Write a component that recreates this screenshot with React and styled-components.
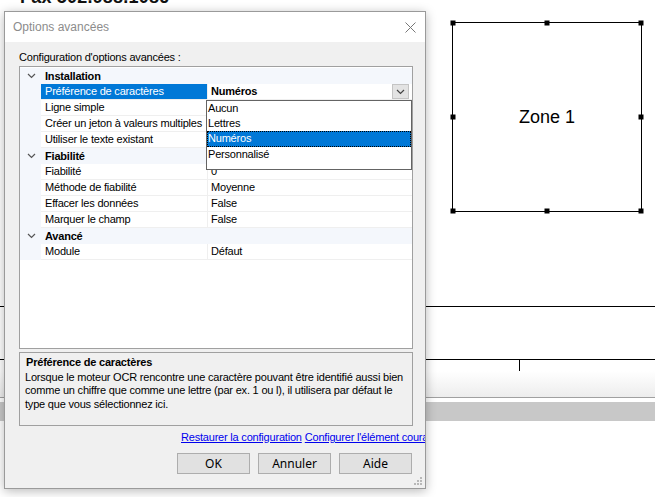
import styled, { createGlobalStyle } from 'styled-components';

const GlobalStyle = createGlobalStyle`
	html, body {
		margin: 0;
		padding: 0;
		background: #ffffff;
	}
	body {
		font-family: "Liberation Sans", Arial, sans-serif;
	}
`;

const Page = styled.div`
	position: relative;
	width: 655px;
	height: 497px;
	overflow: hidden;
	background: #ffffff;
`;

/* document canvas behind the dialog */
const FaxText = styled.div`
	position: absolute;
	left: 20px;
	top: -13px;
	font-family: "Liberation Sans", Arial, sans-serif;
	font-weight: bold;
	font-size: 18px;
	color: #111;
	letter-spacing: 0.2px;
`;

const ZoneBox = styled.div`
	position: absolute;
	left: 452px;
	top: 22px;
	width: 188px;
	height: 188px;
	border: 1px solid #000;
	display: flex;
	align-items: center;
	justify-content: center;
	font-size: 18px;
	color: #000;
`;

const Handle = styled.span`
	position: absolute;
	width: 5px;
	height: 5px;
	background: #000;
	left: ${({ $x }) => $x};
	top: ${({ $y }) => $y};
	transform: translate(-50%, -50%);
`;

const Rule = styled.div`
	position: absolute;
	left: 0;
	right: 0;
	top: ${({ $top }) => $top}px;
	height: 1px;
	background: #000;
`;

const Tick = styled.div`
	position: absolute;
	left: 519px;
	top: 359px;
	width: 1px;
	height: 12px;
	background: #000;
`;

const ShadeBand = styled.div`
	position: absolute;
	left: 0;
	right: 0;
	top: 371px;
	height: 26px;
	border-bottom: 1px solid #a0a0a0;
	background: linear-gradient(#ffffff, #ededed);
`;

const GrayBand = styled.div`
	position: absolute;
	left: 0;
	right: 0;
	top: 402px;
	height: 19px;
	background: #c8c8c8;
`;

/* dialog window */
const Dialog = styled.div`
	position: absolute;
	left: 4px;
	top: 11px;
	width: 420px;
	height: 476px;
	border: 1px solid #9a9a9a;
	background: #f0f0f0;
	box-shadow: 0 2px 10px rgba(0, 0, 0, 0.28);
	display: flex;
	flex-direction: column;
	overflow: hidden;
	font-family: "Liberation Sans", Arial, sans-serif;
	font-size: 11px;
	letter-spacing: -0.2px;
	color: #000;
`;

const TitleBar = styled.div`
	height: 30px;
	flex: none;
	background: #ffffff;
	display: flex;
	align-items: center;
	justify-content: space-between;
	padding: 0 9px 0 8px;
`;

const Title = styled.span`
	font-size: 12px;
	letter-spacing: 0;
	color: #8c8c8c;
`;

const Body = styled.div`
	flex: 1;
	display: flex;
	flex-direction: column;
	padding: 8px 12px 0 14px;
	position: relative;
`;

const Label = styled.div`
	height: 15px;
	line-height: 14px;
	white-space: nowrap;
`;

const Grid = styled.div`
	position: relative;
	margin-top: 1px;
	height: 283px;
	box-sizing: border-box;
	padding-top: 1px;
	border: 1px solid #a0a0a0;
	background: #ffffff;
	display: flex;
	flex-direction: column;
`;

const CategoryRow = styled.div`
	height: 16px;
	display: flex;
	align-items: center;
	background: #f4f7fc;
	font-weight: bold;
`;

const CategoryName = styled.span`
	padding-left: 4px;
`;

const Chevron = styled.span`
	width: 21px;
	display: flex;
	justify-content: center;
	padding-left: 1px;
	box-sizing: border-box;
`;

const PropRow = styled.div`
	height: 16px;
	display: flex;
`;

const Margin = styled.div`
	width: 21px;
	flex: none;
	background: #f4f7fc;
`;

const NameCell = styled.div`
	width: 162px;
	flex: none;
	padding-left: 4px;
	line-height: 15px;
	border-bottom: 1px solid #efefef;
	border-right: 1px solid #efefef;
	white-space: nowrap;
	overflow: hidden;
	background: ${({ $selected }) => ($selected ? '#0078d7' : '#ffffff')};
	color: ${({ $selected }) => ($selected ? '#ffffff' : '#000000')};
`;

const ValueCell = styled.div`
	flex: 1;
	padding-left: 3px;
	line-height: 15px;
	border-bottom: 1px solid #efefef;
	font-weight: ${({ $bold }) => ($bold ? 'bold' : 'normal')};
	white-space: nowrap;
`;

const DropButton = styled.div`
	position: absolute;
	left: 372px;
	top: 17px;
	width: 17px;
	height: 15px;
	background: #e3e3e3;
	border: 1px solid #c4c4c4;
	box-sizing: border-box;
	display: flex;
	align-items: center;
	justify-content: center;
`;

const DropList = styled.div`
	position: absolute;
	left: 186px;
	top: 33px;
	width: 204px;
	height: 68px;
	border: 1px solid #646464;
	background: #ffffff;
	display: flex;
	flex-direction: column;
`;

const DropItem = styled.div`
	height: ${({ $selected }) => ($selected ? '16px' : '15px')};
	line-height: 15px;
	padding-left: 1px;
	box-sizing: border-box;
	background: ${({ $selected }) => ($selected ? '#0078d7' : 'transparent')};
	color: ${({ $selected }) => ($selected ? '#ffffff' : '#000000')};
	outline: ${({ $selected }) => ($selected ? '1px dotted #000' : 'none')};
	outline-offset: -1px;
`;

const Description = styled.div`
	margin-top: 3px;
	height: 74px;
	box-sizing: border-box;
	border: 1px solid #a0a0a0;
	padding: 3px 6px 0 5px;
	line-height: 13.5px;
`;

const DescTitle = styled.div`
	font-weight: bold;
	padding-left: 1px;
	margin-bottom: 1px;
`;

const DescText = styled.div`
	white-space: nowrap;
`;

const LinkBar = styled.div`
	margin-top: 4px;
	height: 14px;
	padding-left: 162px;
	display: flex;
	gap: 3px;
	white-space: nowrap;
	line-height: 14px;
`;

const Link = styled.a`
	color: #0000ee;
	text-decoration: underline;
	cursor: pointer;
`;

const ButtonBar = styled.div`
	margin-top: 9px;
	display: flex;
	justify-content: flex-end;
	gap: 8px;
	padding-right: 1px;
`;

const Button = styled.button`
	width: 73px;
	height: 21px;
	background: #e1e1e1;
	border: 1px solid #adadad;
	font-family: "Noto Sans", "Liberation Sans", sans-serif;
	font-size: 12px;
	letter-spacing: 0;
	color: #000;
	padding: 0;
	display: flex;
	align-items: center;
	justify-content: center;
`;

const Grip = styled.svg`
	position: absolute;
	right: 3px;
	bottom: 3px;
`;

const ChevronIcon = ({ color = '#555' }) => (
	<svg width="9" height="6" viewBox="0 0 9 6">
		<path d="M1 1 L4.5 4.5 L8 1" fill="none" stroke={color} strokeWidth="1.2" />
	</svg>
);

const sections = [
	{
		name: 'Installation',
		props: [
			{ name: 'Préférence de caractères', value: 'Numéros', selected: true },
			{ name: 'Ligne simple', value: '' },
			{ name: 'Créer un jeton à valeurs multiples', value: '' },
			{ name: 'Utiliser le texte existant', value: '' },
		],
	},
	{
		name: 'Fiabilité',
		props: [
			{ name: 'Fiabilité', value: '0' },
			{ name: 'Méthode de fiabilité', value: 'Moyenne' },
			{ name: 'Effacer les données', value: 'False' },
			{ name: 'Marquer le champ', value: 'False' },
		],
	},
	{
		name: 'Avancé',
		props: [{ name: 'Module', value: 'Défaut' }],
	},
];

const choices = ['Aucun', 'Lettres', 'Numéros', 'Personnalisé'];

export default function App() {
	return (
		<Page>
			<GlobalStyle />
			<FaxText>Fax 502.988.1086</FaxText>
			<ZoneBox>
				Zone 1
				<Handle $x="0" $y="0" />
				<Handle $x="50%" $y="0" />
				<Handle $x="100%" $y="0" />
				<Handle $x="0" $y="50%" />
				<Handle $x="100%" $y="50%" />
				<Handle $x="0" $y="100%" />
				<Handle $x="50%" $y="100%" />
				<Handle $x="100%" $y="100%" />
			</ZoneBox>
			<Rule $top={306} />
			<Rule $top={359} />
			<Tick />
			<ShadeBand />
			<GrayBand />

			<Dialog>
				<TitleBar>
					<Title>Options avancées</Title>
					<svg width="11" height="11" viewBox="0 0 11 11">
						<path d="M0.5 0.5 L10.5 10.5 M10.5 0.5 L0.5 10.5" stroke="#777" strokeWidth="1" />
					</svg>
				</TitleBar>
				<Body>
					<Label>Configuration d'options avancées :</Label>
					<Grid>
						{sections.map((section) => (
							<div key={section.name}>
								<CategoryRow>
									<Chevron>
										<ChevronIcon />
									</Chevron>
									<CategoryName>{section.name}</CategoryName>
								</CategoryRow>
								{section.props.map((prop) => (
									<PropRow key={prop.name}>
										<Margin />
										<NameCell $selected={prop.selected}>{prop.name}</NameCell>
										<ValueCell $bold={prop.selected}>{prop.value}</ValueCell>
									</PropRow>
								))}
							</div>
						))}
						<DropButton>
							<ChevronIcon color="#444" />
						</DropButton>
						<DropList>
							{choices.map((choice) => (
								<DropItem key={choice} $selected={choice === 'Numéros'}>
									{choice}
								</DropItem>
							))}
						</DropList>
					</Grid>
					<Description>
						<DescTitle>Préférence de caractères</DescTitle>
						<DescText>
							Lorsque le moteur OCR rencontre une caractère pouvant être identifié aussi bien
							<br />
							comme un chiffre que comme une lettre (par ex. 1 ou l), il utilisera par défaut le
							<br />
							type que vous sélectionnez ici.
						</DescText>
					</Description>
					<LinkBar>
						<Link>Restaurer la configuration </Link>
						<Link>Configurer l'élément courant</Link>
					</LinkBar>
					<ButtonBar>
						<Button>OK</Button>
						<Button>Annuler</Button>
						<Button>Aide</Button>
					</ButtonBar>
					<Grip width="8" height="8" viewBox="0 0 8 8">
						<rect x="6" y="0" width="2" height="2" fill="#b8b8b8" />
						<rect x="3" y="3" width="2" height="2" fill="#b8b8b8" />
						<rect x="6" y="3" width="2" height="2" fill="#b8b8b8" />
						<rect x="0" y="6" width="2" height="2" fill="#b8b8b8" />
						<rect x="3" y="6" width="2" height="2" fill="#b8b8b8" />
						<rect x="6" y="6" width="2" height="2" fill="#b8b8b8" />
					</Grip>
				</Body>
			</Dialog>
		</Page>
	);
}
